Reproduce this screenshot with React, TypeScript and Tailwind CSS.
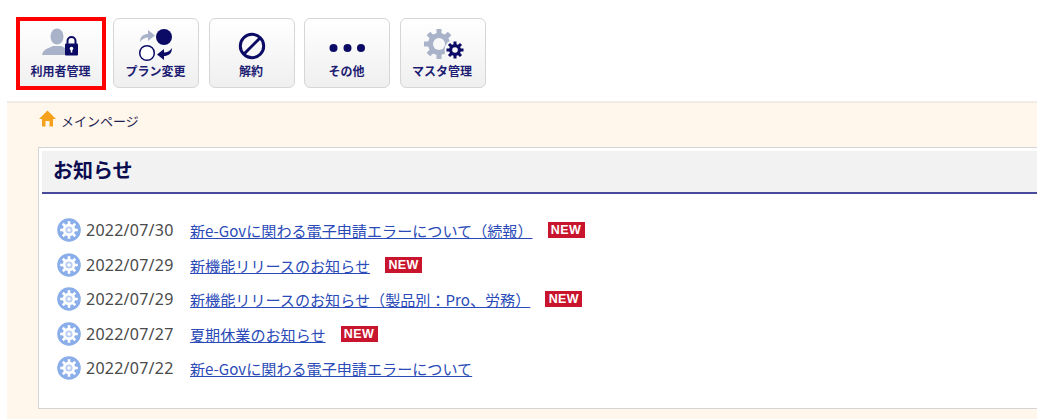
import * as React from "react";

const JP = "font-['Noto_Sans_CJK_JP','Noto_Sans',sans-serif]";

const news = [
  { date: "2022/07/30", title: "新e-Govに関わる電子申請エラーについて（続報）", isNew: true },
  { date: "2022/07/29", title: "新機能リリースのお知らせ", isNew: true },
  { date: "2022/07/29", title: "新機能リリースのお知らせ（製品別：Pro、労務）", isNew: true },
  { date: "2022/07/27", title: "夏期休業のお知らせ", isNew: true },
  { date: "2022/07/22", title: "新e-Govに関わる電子申請エラーについて", isNew: false },
];

function Gear({ cx, cy, r, hole, teeth, tw, tl, fill, holeFill }: { cx: number; cy: number; r: number; hole: number; teeth: number; tw: number; tl: number; fill: string; holeFill: string }) {
  return (
    <g>
      {Array.from({ length: teeth }).map((_, i) => (
        <rect
          key={i}
          x={cx - tw / 2}
          y={cy - r - tl}
          width={tw}
          height={tl + 2}
          fill={fill}
          transform={`rotate(${(360 / teeth) * i} ${cx} ${cy})`}
        />
      ))}
      <circle cx={cx} cy={cy} r={r} fill={fill} />
      <circle cx={cx} cy={cy} r={hole} fill={holeFill} />
    </g>
  );
}

function UserLockIcon() {
  return (
    <svg width="40" height="30" viewBox="0 0 40 30">
      <ellipse cx="16" cy="8.5" rx="6.5" ry="8" fill="#a8b2c8" />
      <path d="M1 27 C2 21 8 20 12 18 L20 18 C23 19.5 25 20 27 21 L27 27 Z" fill="#a8b2c8" />
      <path d="M26.5 16 V13 a4 4 0 0 1 8 0 V16" fill="none" stroke="#0b0b66" strokeWidth="2" />
      <rect x="24" y="15.5" width="13" height="12" rx="1" fill="#0b0b66" />
      <circle cx="30.5" cy="20.5" r="1.8" fill="#fff" />
      <rect x="29.7" y="21" width="1.6" height="3.5" fill="#fff" />
    </svg>
  );
}

function PlanIcon() {
  return (
    <svg width="36" height="34" viewBox="0 0 36 34">
      <circle cx="26" cy="9" r="8" fill="#0b0b66" />
      <circle cx="9" cy="25" r="7.3" fill="#fff" stroke="#0b0b66" strokeWidth="1.5" />
      <path d="M2 14 C2 8 6 6 10 6 V2 L17 7.5 L10 13 V9.5 C7 9.5 4 11 2 14 Z" fill="#a8b2c8" />
      <path d="M34 20 C34 26 30 28 26 28 V32 L19 26.5 L26 21 V24.5 C29 24.5 32 23 34 20 Z" fill="#0b0b66" />
    </svg>
  );
}

function BanIcon() {
  return (
    <svg width="28" height="28" viewBox="0 0 28 28">
      <circle cx="14" cy="14" r="11.7" fill="none" stroke="#0b0b66" strokeWidth="3" />
      <path d="M6 22 L22 6" stroke="#0b0b66" strokeWidth="3" />
    </svg>
  );
}

function DotsIcon() {
  return (
    <svg width="36" height="10" viewBox="0 0 36 10">
      <circle cx="4.5" cy="5" r="4" fill="#0b0b66" />
      <circle cx="18.5" cy="5" r="4" fill="#0b0b66" />
      <circle cx="32" cy="5" r="4" fill="#0b0b66" />
    </svg>
  );
}

function GearsIcon() {
  return (
    <svg width="42" height="32" viewBox="0 0 42 32">
      <Gear cx={15} cy={15} r={11} hole={6} teeth={8} tw={5} tl={4} fill="#a8b2c8" holeFill="#f8f8f8" />
      <circle cx={31} cy={21} r={10.5} fill="#f8f8f8" />
      <Gear cx={31} cy={21} r={6} hole={2.8} teeth={8} tw={3} tl={2.5} fill="#0b0b66" holeFill="#f8f8f8" />
    </svg>
  );
}

function NewsBullet() {
  return (
    <svg width="24" height="24" viewBox="0 0 24 24" className="shrink-0">
      <circle cx="12" cy="12" r="11.8" fill="#8aaeea" />
      <Gear cx={12} cy={12} r={6.2} hole={3.6} teeth={8} tw={2.6} tl={2.6} fill="#ffffff" holeFill="#b9cdf2" />
      <circle cx="12" cy="12" r="1.7" fill="#ffffff" />
    </svg>
  );
}

function MenuButton({ label, icon, iconClass, active }: { label: string; icon: React.ReactNode; iconClass: string; active?: boolean }) {
  return (
    <div
      className={
        active
          ? "w-[90px] h-[73px] border-4 border-[#ff0000] bg-gradient-to-b from-white to-[#f0f0f0] flex flex-col items-center"
          : "w-[86px] h-[70px] mt-px border border-[#d6d6d6] rounded-md bg-gradient-to-b from-white to-[#efefef] flex flex-col items-center"
      }
    >
      <div className={`shrink-0 flex items-center justify-center ${iconClass}`}>{icon}</div>
      <span className="mr-px text-[12px] leading-[16px] font-bold text-[#1c1c72] whitespace-nowrap">{label}</span>
    </div>
  );
}

export default function App() {
  return (
    <div className={`w-[1037px] h-[419px] overflow-hidden bg-white ${JP}`}>
      <div className="h-[101px] pl-4 pt-[17px] flex items-start">
        <MenuButton active label="利用者管理" icon={<UserLockIcon />} iconClass="h-[42px] translate-y-[1px]" />
        <div className="ml-[7px] flex gap-[9.5px]">
          <MenuButton label="プラン変更" icon={<PlanIcon />} iconClass="h-[44px] translate-y-[4px]" />
          <MenuButton label="解約" icon={<BanIcon />} iconClass="h-[44px] translate-y-[5px]" />
          <MenuButton label="その他" icon={<DotsIcon />} iconClass="h-[44px] translate-y-[7px]" />
          <MenuButton label="マスタ管理" icon={<GearsIcon />} iconClass="h-[44px] translate-x-[2px] translate-y-[4px]" />
        </div>
      </div>

      <div className="ml-[7px] h-[318px] border-t-2 border-[#f0ebe4] bg-[#fff6ec] pl-[32px]">
        <div className="h-[44px] pt-[7px] flex items-start">
          <svg width="17" height="17" viewBox="0 0 17 17" className="shrink-0">
            <path d="M8.5 0.5 L17 9 H14 V16.5 H10.5 V11 H6.5 V16.5 H3 V9 H0 Z" fill="#f5a11c" />
          </svg>
          <span className="ml-[5px] text-[13px] leading-[22px] text-[#1c1c50]">メインページ</span>
        </div>

        <div className="-ml-px h-[262px] bg-white border border-r-0 border-[#d4d4d4] pl-[3px] pt-[3px]">
          <div className="h-[43px] bg-[#f2f2f2] border-b-2 border-[#4a4a9c] pl-[11px] pb-[3px] flex items-center">
            <h2 className="text-[20px] font-bold text-[#0b0b50] leading-none">お知らせ</h2>
          </div>
          <ul className="pt-[24px] pl-[15px] flex flex-col gap-[10.5px]">
            {news.map((item, i) => (
              <li key={i} className="h-[24px] flex items-center">
                <NewsBullet />
                <span className="ml-[5px] w-[104px] font-['Noto_Sans',sans-serif] text-[16px] tracking-[0.25px] text-[#4a4a4a]">{item.date}</span>
                <a href="#" className="text-[15.1px] leading-[24px] text-[#2a4ab8] underline whitespace-nowrap">{item.title}</a>
                {item.isNew && (
                  <span className="ml-[15px] h-[16px] w-[37px] bg-[#c8152d] text-white text-[12.5px] font-bold leading-[16px] text-center font-['Liberation_Sans',sans-serif] tracking-[0.4px]">NEW</span>
                )}
              </li>
            ))}
          </ul>
        </div>
      </div>
    </div>
  );
}
